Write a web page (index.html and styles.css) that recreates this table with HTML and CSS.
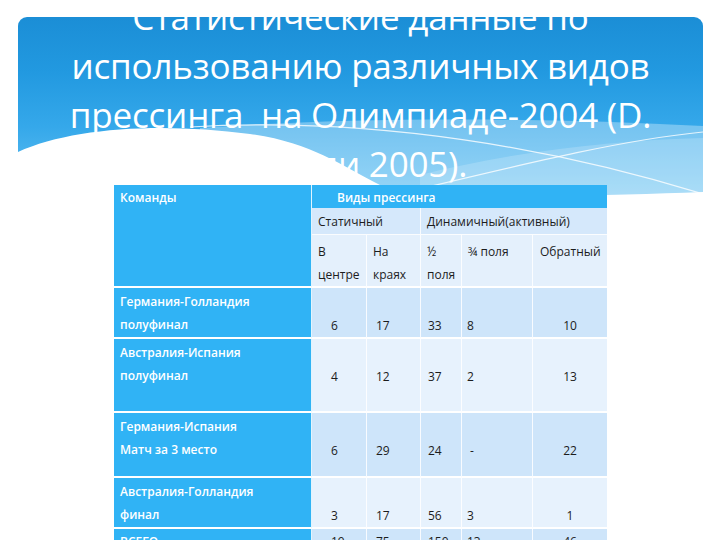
FILE: index.html
```html
<!DOCTYPE html>
<html lang="ru">
<head>
<meta charset="utf-8">
<title>Статистические данные</title>
<link rel="stylesheet" href="styles.css">
</head>
<body>
<header class="banner">
  <svg class="banner-art" viewBox="18 17 685 183" preserveAspectRatio="none" aria-hidden="true">
    <path d="M 200 128 C 330 118, 520 116, 703 126 L 703 205 L 200 205 Z" fill="#ffffff" fill-opacity="0.32"/>
    <path d="M 420 175 C 520 150, 620 140, 703 138 L 703 205 L 420 205 Z" fill="#ffffff" fill-opacity="0.18"/>
    <path d="M 190 127 C 380 116, 560 150, 703 194" fill="none" stroke="#ffffff" stroke-opacity="0.8" stroke-width="1.2"/>
    <path d="M 390 196 C 520 165, 620 140, 703 132" fill="none" stroke="#ffffff" stroke-opacity="0.8" stroke-width="1.2"/>
    <path d="M 18 152 C 70 128, 160 122, 250 134 C 310 142, 340 165, 380 185 C 450 200, 600 196, 703 192 L 703 210 L 18 210 Z" fill="#ffffff"/>
  </svg>
  <h1 class="title">Статистические данные по<br>использованию различных видов<br>прессинга&nbsp; на Олимпиаде-2004 (D.<br>Вилли 2005).</h1>
</header>
<table class="stats">
  <colgroup>
    <col class="c-team"><col class="c-v"><col class="c-na"><col class="c-half"><col class="c-q"><col class="c-back">
  </colgroup>
  <tr class="h1row">
    <td class="team head" rowspan="3">Команды</td>
    <td class="kinds" colspan="5">Виды прессинга</td>
  </tr>
  <tr class="h2row">
    <td colspan="2">Статичный</td>
    <td colspan="3">Динамичный(активный)</td>
  </tr>
  <tr class="h3row">
    <td>В<br>центре</td>
    <td>На<br>краях</td>
    <td>½<br>поля</td>
    <td>¾ поля</td>
    <td class="back-h">Обратный</td>
  </tr>
  <tr class="row-a dark">
    <td class="team">Германия-Голландия<br>полуфинал</td>
    <td class="num n-v">6</td><td class="num n-na">17</td><td class="num n-half">33</td><td class="num n-q">8</td><td class="num n-back">10</td>
  </tr>
  <tr class="row-b light">
    <td class="team">Австралия-Испания<br>полуфинал</td>
    <td class="num n-v">4</td><td class="num n-na">12</td><td class="num n-half">37</td><td class="num n-q">2</td><td class="num n-back">13</td>
  </tr>
  <tr class="row-c dark">
    <td class="team">Германия-Испания<br>Матч за 3 место</td>
    <td class="num n-v">6</td><td class="num n-na">29</td><td class="num n-half">24</td><td class="num n-q">&nbsp;-</td><td class="num n-back">22</td>
  </tr>
  <tr class="row-d light">
    <td class="team">Австралия-Голландия<br>финал</td>
    <td class="num n-v">3</td><td class="num n-na">17</td><td class="num n-half">56</td><td class="num n-q">3</td><td class="num n-back">1</td>
  </tr>
  <tr class="row-e dark">
    <td class="team">ВСЕГО</td>
    <td class="tot n-v">19</td><td class="tot n-na">75</td><td class="tot n-half">150</td><td class="tot n-q">13</td><td class="tot n-back">46</td>
  </tr>
</table>
</body>
</html>
```
FILE: styles.css
```css
html, body {
  margin: 0;
  padding: 0;
  background: #ffffff;
}
body {
  width: 720px;
  height: 540px;
  overflow: hidden;
  font-family: "Open Sans", "Noto Sans", "DejaVu Sans", sans-serif;
}
.banner {
  position: relative;
  display: flow-root;
  margin: 17px 17px 0 18px;
  height: 183px;
  border-radius: 9px 9px 0 0;
  background: linear-gradient(180deg, #1b8ed6 0%, #2299e0 30%, #35a8ea 60%, #55b9f0 85%, #6cc4f3 100%);
}
.banner-art {
  position: absolute;
  left: 0;
  top: 0;
  width: 100%;
  height: 100%;
  display: block;
}
.title {
  position: relative;
  margin: -25px 0 0 0;
  padding: 0;
  font-weight: 400;
  font-size: 35px;
  line-height: 49px;
  color: #ffffff;
  text-align: center;
  letter-spacing: -0.2px;
}
.stats {
  position: relative;
  margin: -15px 0 0 114px;
  border-collapse: separate;
  border-spacing: 0;
  table-layout: fixed;
  width: 493px;
  font-size: 12px;
  color: #1c1c1c;
}
.c-team { width: 198px; }
.c-v { width: 55px; }
.c-na { width: 54px; }
.c-half { width: 41px; }
.c-q { width: 71px; }
.c-back { width: 74px; }
.stats td {
  box-sizing: border-box;
  padding: 2px 0 0 6px;
  line-height: 23px;
  vertical-align: top;
  border-right: 1px solid rgba(255, 255, 255, 0.85);
  border-bottom: 2px solid #ffffff;
  white-space: nowrap;
  overflow: hidden;
}
.stats td:last-child { border-right: none; }
.team {
  background: #30b3f5;
  color: #ffffff;
  font-weight: 600;
  padding-left: 5px;
}
.h1row td {
  height: 23px;
  padding-top: 3px;
  line-height: 19px;
  border-bottom: none;
}
.team.head {
  border-bottom: 2px solid #ffffff;
}
.kinds {
  background: #30b3f5;
  color: #ffffff;
  font-weight: 600;
  padding-left: 25px !important;
}
.h2row td {
  height: 27px;
  padding-top: 1px;
  line-height: 25px;
  background: #d5e8fb;
  border-bottom: 1px solid rgba(255, 255, 255, 0.9);
}
.h3row td {
  background: #e4f0fc;
  padding-top: 5px;
  height: 52px;
}
.back-h { padding-left: 7px !important; }
.dark td { background: #cee5fa; }
.light td { background: #e7f2fd; }
.dark td.team, .light td.team { background: #30b3f5; }
.row-a td { height: 50px; }
.row-b td { height: 74px; }
.row-c td { height: 65px; }
.row-d td { height: 51px; }
.row-e td { height: 40px; }
.num { padding-top: 26px !important; }
.n-v { padding-left: 19px !important; }
.n-na { padding-left: 9px !important; }
.n-half { padding-left: 7px !important; }
.n-q { padding-left: 5px !important; }
.n-back { padding-left: 0 !important; padding-right: 24px; text-align: center; }
.tot { padding-top: 1px !important; }
.row-e .team { padding-top: 1px; }
```
